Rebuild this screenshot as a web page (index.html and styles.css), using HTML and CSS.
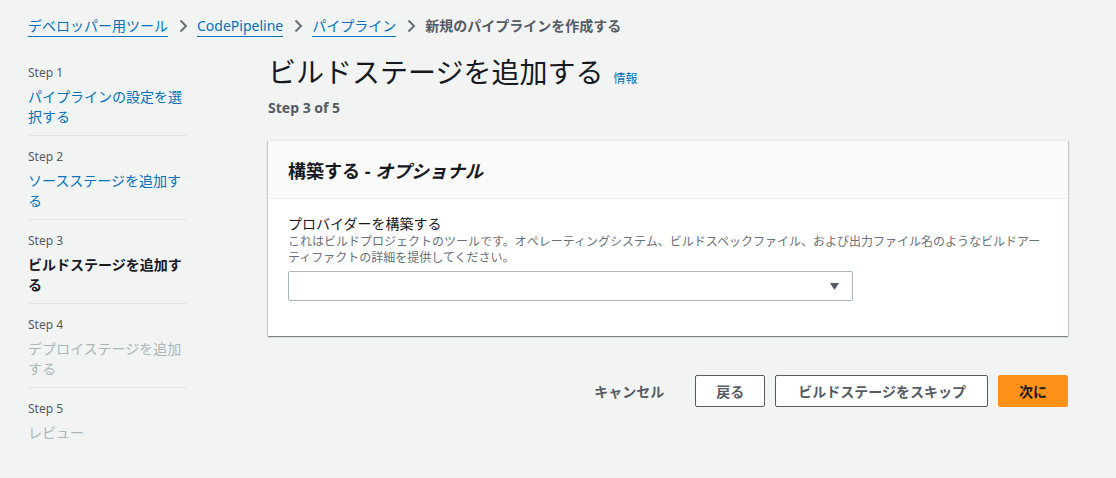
FILE: index.html
```html
<!DOCTYPE html>
<html lang="ja">
<head>
<meta charset="utf-8">
<link rel="stylesheet" href="styles.css">
</head>
<body>
<div class="page">
  <nav class="crumbs">
    <a class="crumb-link">デベロッパー用ツール</a>
    <svg class="chev" viewBox="0 0 16 16"><path d="M5.5 2.5 L11 8 L5.5 13.5" fill="none" stroke="#687078" stroke-width="2"/></svg>
    <a class="crumb-link">CodePipeline</a>
    <svg class="chev" viewBox="0 0 16 16"><path d="M5.5 2.5 L11 8 L5.5 13.5" fill="none" stroke="#687078" stroke-width="2"/></svg>
    <a class="crumb-link">パイプライン</a>
    <svg class="chev" viewBox="0 0 16 16"><path d="M5.5 2.5 L11 8 L5.5 13.5" fill="none" stroke="#687078" stroke-width="2"/></svg>
    <span class="crumb-current">新規のパイプラインを作成する</span>
  </nav>
  <div class="layout">
    <ul class="steps">
      <li class="step">
        <div class="step-num">Step 1</div>
        <a class="step-link">パイプラインの設定を選択する</a>
      </li>
      <li class="step">
        <div class="step-num">Step 2</div>
        <a class="step-link">ソースステージを追加する</a>
      </li>
      <li class="step">
        <div class="step-num">Step 3</div>
        <span class="step-active">ビルドステージを追加する</span>
      </li>
      <li class="step">
        <div class="step-num">Step 4</div>
        <span class="step-disabled">デプロイステージを追加する</span>
      </li>
      <li class="step last">
        <div class="step-num">Step 5</div>
        <span class="step-disabled">レビュー</span>
      </li>
    </ul>
    <main class="main">
      <div class="title-row">
        <h1 class="title">ビルドステージを追加する</h1>
        <a class="info">情報</a>
      </div>
      <div class="step-of">Step 3 of 5</div>
      <section class="card">
        <div class="card-head">
          <h2 class="card-title">構築する - <em>オプショナル</em></h2>
        </div>
        <div class="card-body">
          <div class="field-label">プロバイダーを構築する</div>
          <div class="field-desc">これはビルドプロジェクトのツールです。オペレーティングシステム、ビルドスペックファイル、および出力ファイル名のようなビルドアーティファクトの詳細を提供してください。</div>
          <div class="select">
            <svg class="caret" viewBox="0 0 12 10"><path d="M1 1 H11 L6 9 Z" fill="#545b64"/></svg>
          </div>
        </div>
      </section>
      <div class="actions">
        <button class="btn-link">キャンセル</button>
        <button class="btn">戻る</button>
        <button class="btn skip">ビルドステージをスキップ</button>
        <button class="btn primary">次に</button>
      </div>
    </main>
  </div>
</div>
</body>
</html>
```
FILE: styles.css
```css
* { box-sizing: border-box; }
html, body {
  margin: 0;
  padding: 0;
  background: #f2f3f3;
  font-family: "Noto Sans", "Noto Sans CJK JP", sans-serif;
  color: #16191f;
}
.page {
  padding: 14px 28px 0 28px;
  width: 1116px;
  height: 478px;
}
.crumbs {
  display: flex;
  align-items: center;
  height: 24px;
  font-size: 14px;
}
.crumb-link {
  color: #0073bb;
  text-decoration: none;
  border-bottom: 1px solid #0073bb;
  line-height: 20px;
}
.chev {
  width: 16px;
  height: 16px;
  margin: 0 6px 0 7px;
}
.crumb-current {
  color: #545b64;
  font-weight: bold;
  line-height: 20px;
}
.layout {
  display: flex;
  margin-top: 27px;
}
.steps {
  list-style: none;
  margin: 0;
  padding: 0;
  width: 159px;
  flex: none;
}
.step {
  border-bottom: 1px solid #e1e4e4;
  padding: 0 0 8px 0;
  margin-bottom: 13px;
}
.step.last { border-bottom: none; }
.step-num {
  font-size: 12px;
  color: #545b64;
  line-height: 16px;
  margin-bottom: 6px;
}
.step-link, .step-active, .step-disabled {
  display: block;
  font-size: 14px;
  line-height: 20px;
}
.step-link { color: #0073bb; }
.step-active { color: #16191f; font-weight: bold; }
.step-disabled { color: #aab7b8; }
.main {
  margin-left: 81px;
  width: 800px;
}
.title-row {
  display: flex;
  align-items: baseline;
  margin-top: -15px;
}
.title {
  margin: 0;
  font-size: 28px;
  font-weight: normal;
  line-height: 44px;
  color: #16191f;
}
.info {
  margin-left: 10px;
  font-size: 12px;
  color: #0073bb;
}
.step-of {
  font-size: 14px;
  font-weight: bold;
  color: #545b64;
  line-height: 20px;
  margin-top: 4px;
}
.card {
  margin-top: 22px;
  background: #fff;
  box-shadow: 0 1px 1px 0 rgba(0,28,36,.3), 1px 1px 1px 0 rgba(0,28,36,.15), -1px 1px 1px 0 rgba(0,28,36,.15);
  border-top: 1px solid #eaeded;
}
.card-head {
  background: #fafafa;
  border-bottom: 1px solid #eaeded;
  height: 58px;
  padding: 0 20px;
  display: flex;
  align-items: center;
}
.card-title {
  margin: 0;
  font-size: 18px;
  font-weight: bold;
  color: #16191f;
}
.card-title em { font-style: italic; }
.card-body {
  padding: 15px 20px 35px 20px;
}
.field-label {
  font-size: 14px;
  line-height: 20px;
  color: #16191f;
}
.field-desc {
  font-size: 12px;
  line-height: 16px;
  color: #687078;
  margin-bottom: 5px;
}
.select {
  width: 565px;
  height: 30px;
  border: 1px solid #aab7b8;
  border-radius: 2px;
  background: #fff;
  display: flex;
  align-items: center;
  justify-content: flex-end;
  padding-right: 12px;
}
.caret { width: 11px; height: 9px; }
.actions {
  display: flex;
  justify-content: flex-end;
  align-items: center;
  margin-top: 39px;
  gap: 10px;
}
.btn, .btn-link {
  font-family: inherit;
  font-size: 14px;
  font-weight: bold;
  height: 32px;
  border-radius: 2px;
  padding: 0 20px;
  cursor: pointer;
}
.btn-link {
  background: none;
  border: 1px solid transparent;
  color: #545b64;
}
.btn {
  background: #fff;
  border: 1px solid #545b64;
  color: #545b64;
}
.btn.skip { padding: 0 21px 0 22px; }
.btn.primary {
  background: #ff9119;
  border-color: #ff9119;
  color: #16191f;
  padding: 0 20px;
}
```
